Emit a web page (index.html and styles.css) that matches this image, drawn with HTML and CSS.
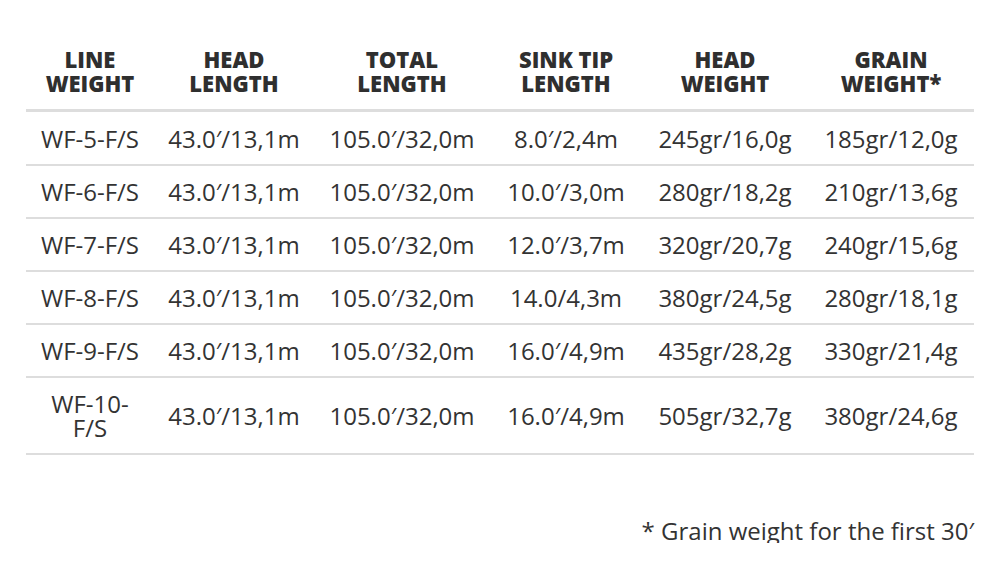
FILE: index.html
```html
<!DOCTYPE html>
<html lang="en">
<head>
<meta charset="utf-8">
<title>Line specifications</title>
<link rel="stylesheet" href="styles.css">
</head>
<body>
<main class="page">
  <table class="spec">
    <colgroup>
      <col class="c1"><col class="c2"><col class="c3"><col class="c4"><col class="c5"><col class="c6">
    </colgroup>
    <thead>
      <tr>
        <th>LINE<br>WEIGHT</th>
        <th>HEAD<br>LENGTH</th>
        <th>TOTAL<br>LENGTH</th>
        <th>SINK TIP<br>LENGTH</th>
        <th>HEAD<br>WEIGHT</th>
        <th>GRAIN<br>WEIGHT*</th>
      </tr>
    </thead>
    <tbody>
      <tr><td>WF-5-F/S</td><td>43.0′/13,1m</td><td>105.0′/32,0m</td><td>8.0′/2,4m</td><td>245gr/16,0g</td><td>185gr/12,0g</td></tr>
      <tr><td>WF-6-F/S</td><td>43.0′/13,1m</td><td>105.0′/32,0m</td><td>10.0′/3,0m</td><td>280gr/18,2g</td><td>210gr/13,6g</td></tr>
      <tr><td>WF-7-F/S</td><td>43.0′/13,1m</td><td>105.0′/32,0m</td><td>12.0′/3,7m</td><td>320gr/20,7g</td><td>240gr/15,6g</td></tr>
      <tr><td>WF-8-F/S</td><td>43.0′/13,1m</td><td>105.0′/32,0m</td><td>14.0/4,3m</td><td>380gr/24,5g</td><td>280gr/18,1g</td></tr>
      <tr><td>WF-9-F/S</td><td>43.0′/13,1m</td><td>105.0′/32,0m</td><td>16.0′/4,9m</td><td>435gr/28,2g</td><td>330gr/21,4g</td></tr>
      <tr><td>WF-10-<br>F/S</td><td>43.0′/13,1m</td><td>105.0′/32,0m</td><td>16.0′/4,9m</td><td>505gr/32,7g</td><td>380gr/24,6g</td></tr>
    </tbody>
  </table>
  <p class="note">* Grain weight for the first 30′</p>
</main>
</body>
</html>
```

FILE: styles.css
```css
html, body {
  margin: 0;
  padding: 0;
  background: #ffffff;
}

body {
  font-family: "Open Sans", "Liberation Sans", sans-serif;
  color: #333333;
}

.page {
  width: 948px;
  padding: 33px 26px 0 26px;
}

.spec {
  width: 948px;
  border-collapse: collapse;
  table-layout: fixed;
}

.c1 { width: 128px; }
.c2 { width: 160px; }
.c3 { width: 176px; }
.c4 { width: 152px; }
.c5 { width: 166px; }
.c6 { width: 166px; }

.spec th {
  font-size: 22px;
  line-height: 24px;
  font-weight: 800;
  color: #2f2f2f;
  text-align: center;
  padding: 14px 0 14px 0;
  border-bottom: 3px solid #dddddd;
  white-space: nowrap;
}

.spec td {
  font-size: 24px;
  line-height: 24px;
  font-weight: 400;
  text-align: center;
  padding: 14px 0 13px 0;
  border-bottom: 2px solid #dddddd;
  white-space: nowrap;
}

.spec tbody tr:first-child td {
  padding-top: 15px;
}

.note {
  margin: 64px 0 0 0;
  font-size: 24px;
  line-height: 24px;
  text-align: right;
}
```
